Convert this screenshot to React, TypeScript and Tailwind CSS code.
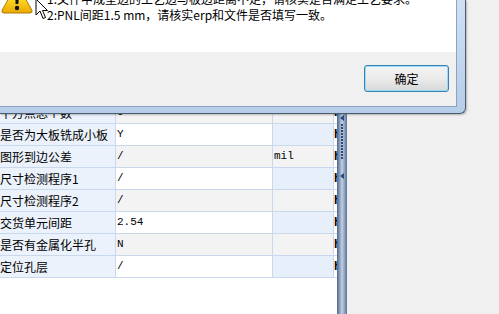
import React from 'react';

type Row = { label: string; value: string; unit: string; tail: string };

const rows: Row[] = [
  { label: '成品板厚', value: '1.6', unit: 'mm', tail: 'h' },
  { label: '最小孔径', value: '0.3', unit: 'mm', tail: 'h' },
  { label: '最小线宽', value: '4', unit: 'mil', tail: 'h' },
  { label: '最小线距', value: '4', unit: 'mil', tail: 'h' },
  { label: '平方点总个数', value: '0', unit: '', tail: 'K' },
  { label: '是否为大板铣成小板', value: 'Y', unit: '', tail: 'h' },
  { label: '图形到边公差', value: '/', unit: 'mil', tail: 'h' },
  { label: '尺寸检测程序1', value: '/', unit: '', tail: 'h' },
  { label: '尺寸检测程序2', value: '/', unit: '', tail: 'h' },
  { label: '交货单元间距', value: '2.54', unit: '', tail: 'h' },
  { label: '是否有金属化半孔', value: 'N', unit: '', tail: 'h' },
  { label: '定位孔层', value: '/', unit: '', tail: 'h' },
];

const WarningIcon = () => (
  <svg width="32" height="32" viewBox="0 0 32 32">
    <defs>
      <linearGradient id="warn" x1="0" y1="0" x2="0" y2="1">
        <stop offset="0" stopColor="#fff27a" />
        <stop offset="0.6" stopColor="#fbd11e" />
        <stop offset="1" stopColor="#eaa800" />
      </linearGradient>
    </defs>
    <path d="M16 1.5 L31 28.5 Q31.6 31 29 31 L3 31 Q0.4 31 1 28.5 Z" fill="url(#warn)" stroke="#b07a00" strokeWidth="1" />
    <path d="M13.8 9 L18.2 9 L17.4 22 L14.6 22 Z" fill="#111" />
    <circle cx="16" cy="26" r="2.2" fill="#111" />
  </svg>
);

const Cursor = () => (
  <svg width="14" height="22" viewBox="0 0 14 22">
    <path d="M1 1 L1 17 L5 13 L8 20.5 L10.5 19.5 L7.5 12.5 L12.5 12.5 Z" fill="#fff" stroke="#000" strokeWidth="1" strokeLinejoin="miter" />
  </svg>
);

const LeftArrow = () => (
  <div className="w-0 h-0 border-y-[3px] border-y-transparent border-r-[4px] border-r-[#2c4a7c]" />
);

export default function App() {
  return (
    <div className="relative w-[499px] h-[314px] overflow-hidden bg-[#f0f0f0] text-black [font-family:'Noto_Sans_CJK_SC','Liberation_Sans',sans-serif]">
      <div className="flex h-full">
        <div className="w-[337px] h-full bg-white flex flex-col pt-[14px]">
          {rows.map((r, i) => {
            const odd = i % 2 === 1;
            return (
              <div key={i} className="flex h-[22px] border-b border-[#c9d8ec]">
                <div className="w-[116px] shrink-0 border-r border-[#c9d8ec] bg-[#ebf2fb] flex items-center text-[12px] leading-none whitespace-nowrap overflow-hidden">
                  {r.label}
                </div>
                <div
                  className={`w-[157px] shrink-0 border-r border-[#c9d8ec] flex items-center pl-[1px] text-[11px] [font-family:'Liberation_Mono',monospace] ${
                    odd ? 'bg-white' : 'bg-[#f3f3f3]'
                  }`}
                >
                  {r.value}
                </div>
                <div
                  className={`w-[61px] shrink-0 border-r border-[#c9d8ec] flex items-center pl-[1px] text-[11px] [font-family:'Liberation_Mono',monospace] ${
                    odd ? 'bg-[#e7effb]' : 'bg-[#f3f3f3]'
                  }`}
                >
                  {r.unit}
                </div>
                <div className="w-[3px] shrink-0 overflow-hidden flex items-center text-[12px] font-bold [font-family:'Liberation_Mono',monospace]">
                  {r.tail}
                </div>
              </div>
            );
          })}
        </div>
        <div className="w-[10px] h-full shrink-0 bg-gradient-to-r from-[#4f6789] via-[#c2d0e4] to-[#5d7597] flex flex-col items-center pt-[115px]">
          <LeftArrow />
          <div className="flex flex-col gap-[1px] mt-[3px]">
            {Array.from({ length: 12 }).map((_, i) => (
              <div key={i} className="w-[2px] h-[2px] bg-[#2c4a7c]" />
            ))}
          </div>
          <div className="mt-[14px]">
            <LeftArrow />
          </div>
        </div>
        <div className="flex-1" />
      </div>

      {/* message box */}
      <div className="absolute left-0 top-0 w-[466px] h-[114px] bg-gradient-to-b from-[#cfe0f4] to-[#b6cde9] border-r border-b border-[#4b5b70] rounded-br-[6px] pr-[8px] pb-[6px] shadow-[1px_1px_2px_rgba(0,0,0,0.25)]">
        <div className="h-full flex flex-col border-r border-b border-[#8ea3bd]">
          <div className="relative h-[52px] bg-white overflow-hidden">
            <div className="flex gap-[14px] -mt-[18px] pl-[1px]">
              <WarningIcon />
              <div className="mt-[9px] text-[12px] leading-[16px] whitespace-nowrap">
                <div>1:文件中成型边的工艺边与板边距离不足，请核实是否满足工艺要求。</div>
                <div>2:PNL间距1.5 mm，请核实erp和文件是否填写一致。</div>
              </div>
            </div>
            <div className="absolute left-[35px] -top-[2px]">
              <Cursor />
            </div>
          </div>
          <div className="flex-1 bg-[#f0f0f0] flex justify-end items-start pt-[13px] pr-[7px]">
            <button className="w-[85px] h-[27px] rounded-[3px] border border-[#3c7fb1] shadow-[inset_0_0_0_1px_#97dcf8] bg-gradient-to-b from-[#f3f3f3] via-[#ebebeb] to-[#d8d8d8] text-[12px] leading-none">
              确定
            </button>
          </div>
        </div>
      </div>
    </div>
  );
}
